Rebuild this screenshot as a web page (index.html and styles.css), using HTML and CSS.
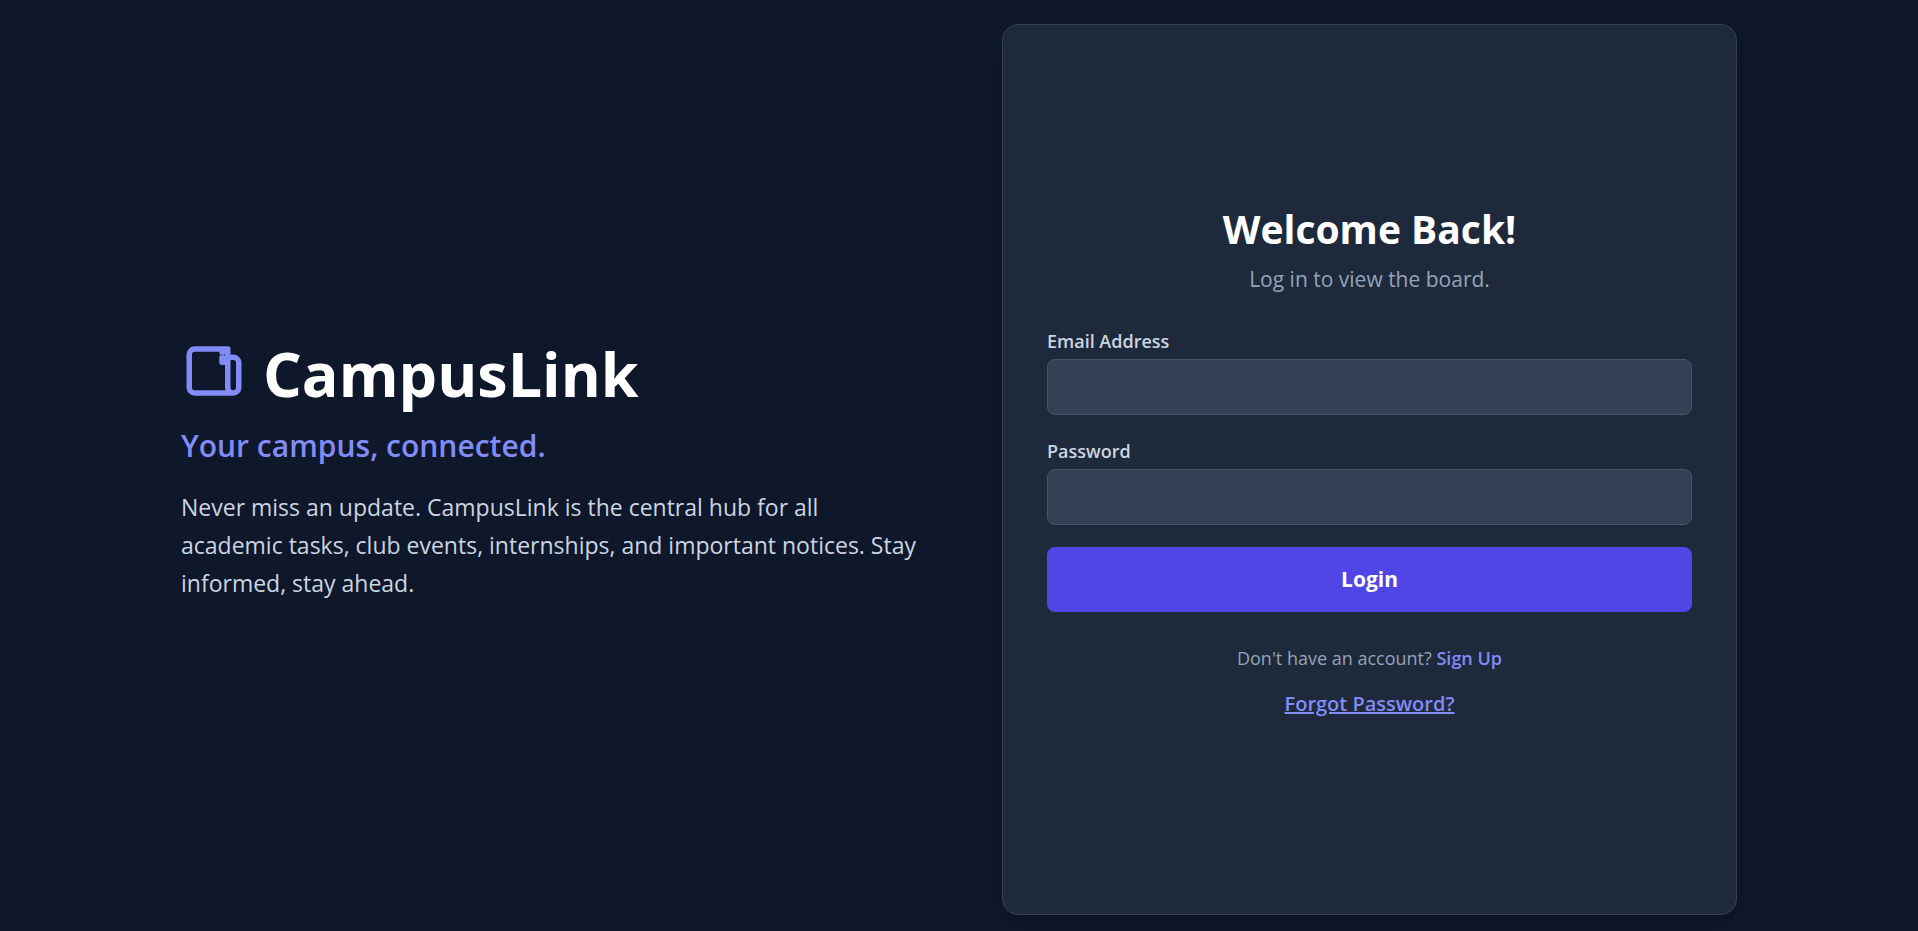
FILE: index.html
```
<!DOCTYPE html>
<html lang="en">
<head>
<meta charset="utf-8">
<meta name="viewport" content="width=device-width, initial-scale=1">
<title>CampusLink</title>
<link rel="stylesheet" href="styles.css">
</head>
<body>
<main class="page">
  <section class="intro">
    <div class="brand">
      <svg class="brand-icon" viewBox="0 0 24 24" fill="none" stroke="currentColor" stroke-width="2" stroke-linecap="round" stroke-linejoin="round" aria-hidden="true">
        <path d="M19 20H5a2 2 0 0 1-2-2V6a2 2 0 0 1 2-2h12v14a2 2 0 0 0 4 0V9a2 2 0 0 0-2-2h-2M19 20a2 2 0 0 1-2-2M19 20a2 2 0 0 0 2-2"/>
        <path fill="currentColor" stroke="none" d="M13.900 4.500h2.300v5.300h-1.400a.9.9 0 0 1-.9-.9V7.200q0-.6.5-1-.5-.4-.5-1z"/>
        <path class="brand-icon-notch" stroke-width=".4" d="M14.900 6.100v.1M15.800 6.100v.1"/>
      </svg>
      <h1 class="brand-name">CampusLink</h1>
    </div>
    <p class="tagline">Your campus, connected.</p>
    <p class="summary">Never miss an update. CampusLink is the central hub for all academic tasks, club events, internships, and important notices. Stay informed, stay ahead.</p>
  </section>
  <section class="card">
    <h2 class="card-title">Welcome Back!</h2>
    <p class="card-subtitle">Log in to view the board.</p>
    <form class="form">
      <div class="field">
        <label class="label" for="email">Email Address</label>
        <input class="input" id="email" type="email">
      </div>
      <div class="field">
        <label class="label" for="password">Password</label>
        <input class="input" id="password" type="password">
      </div>
      <button class="submit" type="submit">Login</button>
    </form>
    <p class="signup">Don't have an account? <a class="signup-link" href="#signup">Sign Up</a></p>
    <a class="forgot" href="#forgot">Forgot Password?</a>
  </section>
</main>
</body>
</html>
```
FILE: styles.css
```
* {
  box-sizing: border-box;
}

body {
  margin: 0;
  background: #0f172a;
  color: #cbd5e1;
  font-family: "Open Sans", "Noto Sans", sans-serif;
}

h1, h2, p {
  margin: 0;
}

.page {
  display: grid;
  grid-template-columns: 1fr 1fr;
  gap: 86px;
  width: 100%;
  max-width: 1604px;
  min-height: 100vh;
  margin: 0 auto;
  padding: 24px 24px 16px;
}

.intro {
  align-self: center;
}

.brand {
  display: flex;
  align-items: flex-start;
  gap: 16px;
  margin-bottom: 14px;
}

.brand-icon {
  width: 66px;
  height: 66px;
  color: #818cf8;
}

.brand-icon-notch {
  stroke: #0f172a;
}

.brand-name {
  color: #fff;
  font-size: 61px;
  font-weight: 700;
  line-height: 72px;
}

.tagline {
  margin-bottom: 20px;
  color: #818cf8;
  font-size: 30px;
  font-weight: 600;
  line-height: 44px;
}

.summary {
  font-size: 23px;
  line-height: 38px;
}

.card {
  display: flex;
  flex-direction: column;
  justify-content: center;
  padding: 44px 44px 58px;
  border: 1px solid #334155;
  border-radius: 16px;
  background: #1e293b;
  box-shadow: 0 12px 24px -8px rgb(0 0 0 / 30%);
}

.card-title {
  margin-bottom: 10px;
  color: #fff;
  font-size: 39px;
  font-weight: 700;
  line-height: 48px;
  text-align: center;
}

.card-subtitle {
  margin-bottom: 32px;
  color: #94a3b8;
  font-size: 21px;
  line-height: 32px;
  text-align: center;
}

.form {
  display: flex;
  flex-direction: column;
  gap: 22px;
}

.field {
  display: flex;
  flex-direction: column;
  gap: 4px;
}

.label {
  font-size: 18px;
  font-weight: 600;
  line-height: 28px;
}

.input {
  width: 100%;
  height: 56px;
  padding: 12px 16px;
  border: 1px solid #475569;
  border-radius: 8px;
  background: #334155;
  color: #fff;
  font: inherit;
}

.submit {
  padding: 16px;
  border: 0;
  border-radius: 8px;
  background: #4f46e5;
  color: #fff;
  font-family: inherit;
  font-size: 21px;
  font-weight: 700;
  line-height: 33px;
}

.signup {
  margin-top: 32px;
  color: #94a3b8;
  font-size: 18px;
  line-height: 28px;
  text-align: center;
}

.signup-link {
  color: #818cf8;
  font-weight: 600;
  text-decoration: none;
}

.forgot {
  align-self: center;
  margin-top: 16px;
  color: #818cf8;
  font-size: 20px;
  font-weight: 600;
  line-height: 32px;
}
```
